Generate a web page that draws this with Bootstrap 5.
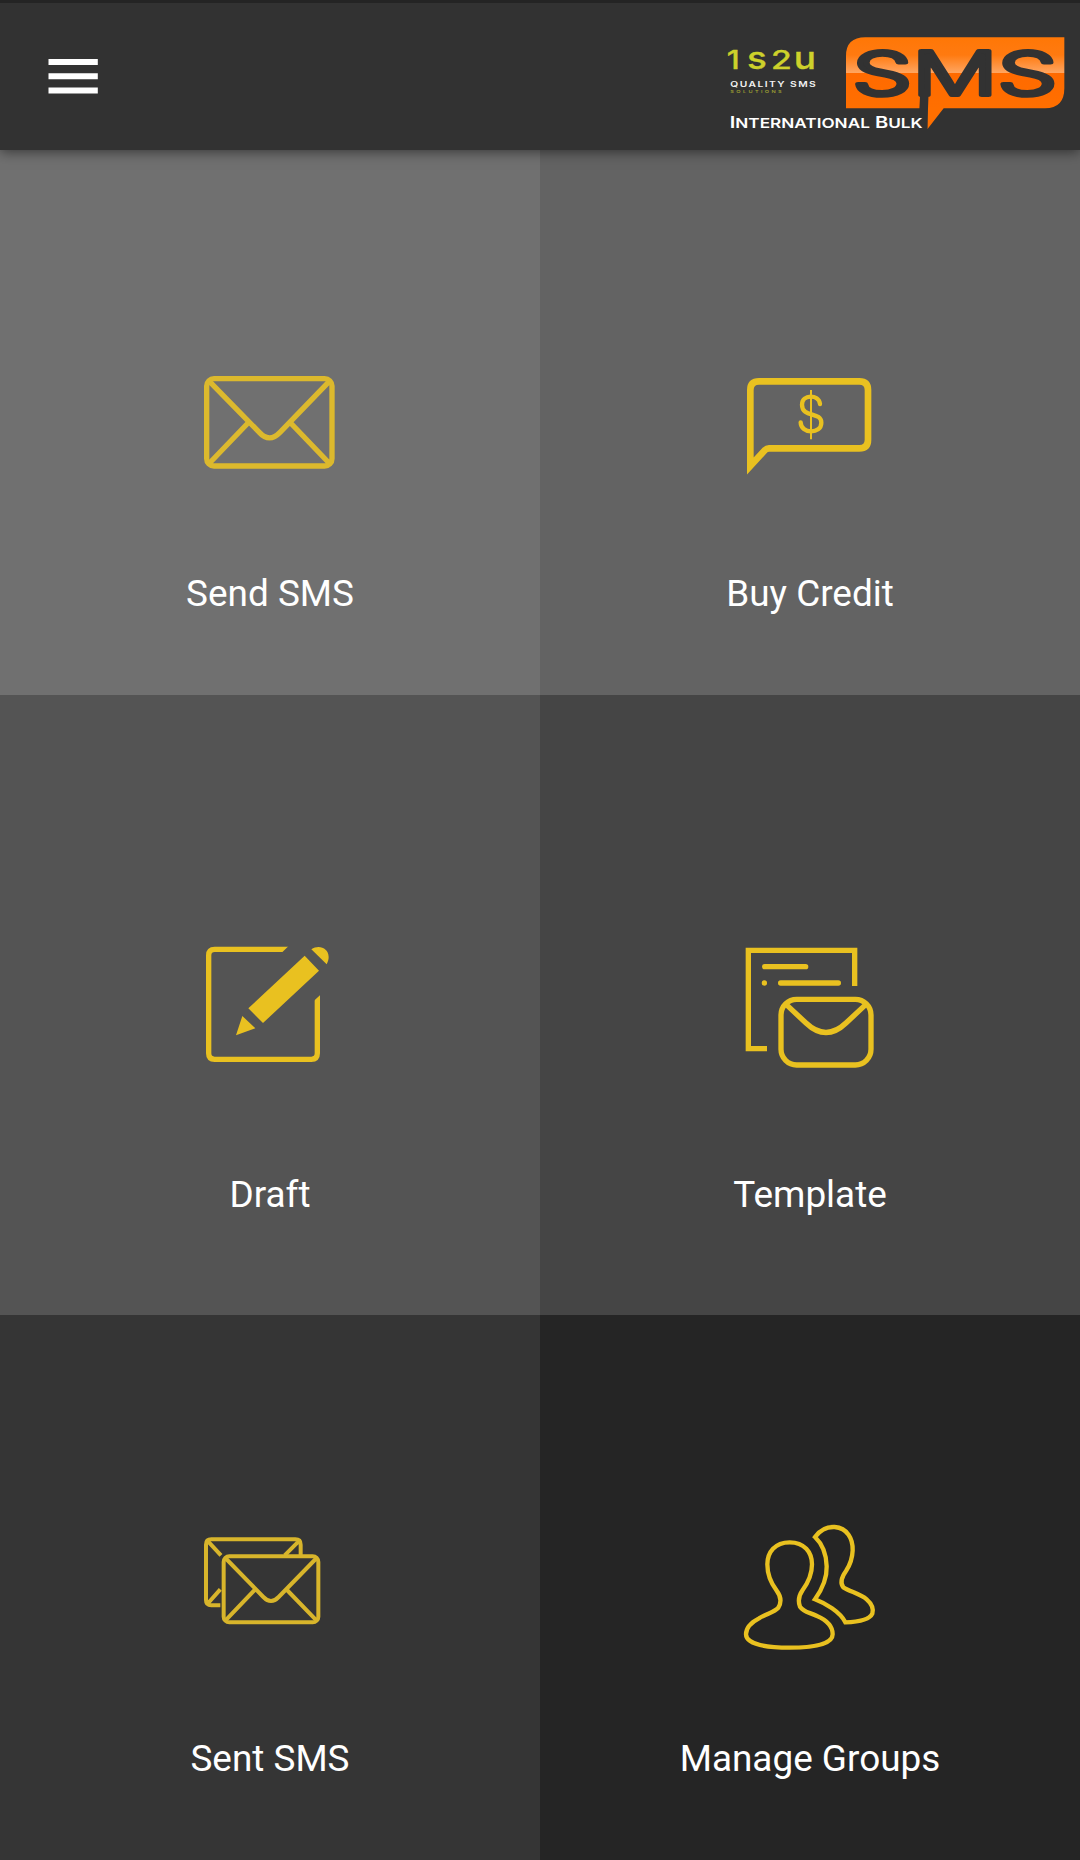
<!DOCTYPE html>
<html lang="en">
<head>
<meta charset="utf-8">
<meta name="viewport" content="width=device-width, initial-scale=1">
<title>1s2u International Bulk SMS</title>
<link href="https://cdn.jsdelivr.net/npm/bootstrap@5.3.0/dist/css/bootstrap.min.css" rel="stylesheet">
<style>
  body { background: #323232; font-family: Roboto, "Liberation Sans", sans-serif; }
  .app { height: 1860px; overflow: hidden; }
  .topbar { height: 150px; background: #323232; border-top: 3px solid #242424; box-shadow: 0 2px 12px rgba(0,0,0,.5); z-index: 2; padding: 0 0 0 48px; }
  .menu-btn { width: 50px; height: 35px; line-height: 0; }
  .brand-logo { width: 380px; height: 130px; align-self: flex-end; }
  .tile { color: #fff; }
  .tile:hover { color: #fff; }
  .tile svg { display: block; width: 180px; fill: none; stroke: #e9c120; flex: none; }
  .tile span { font-size: 36.9px; line-height: 44px; }
  .row-a { height: 545px; } .row-a .tile { padding-top: 200px; } .row-a svg { height: 140px; } .row-a span { margin-top: 82px; }
  .row-b { height: 620px; } .row-b .tile { padding-top: 225px; } .row-b svg { height: 160px; } .row-b span { margin-top: 93px; }
  .row-c { height: 545px; } .row-c .tile { padding-top: 185px; } .row-c svg { height: 160px; } .row-c span { margin-top: 77px; }
  .shade-1 { background: #707070; } .shade-2 { background: #636363; }
  .shade-3 { background: #545454; } .shade-4 { background: #454545; }
  .shade-5 { background: #353535; } .shade-6 { background: #252525; }
  .wide { font-family: Inter, sans-serif; }
  .caps { text-transform: uppercase; }
</style>
<script src="https://cdn.jsdelivr.net/npm/bootstrap@5.3.0/dist/js/bootstrap.bundle.min.js"></script>
</head>
<body>
<div class="app d-flex flex-column">
  <header class="topbar navbar flex-nowrap justify-content-between align-items-center position-relative flex-shrink-0">
    <button class="menu-btn btn p-0 border-0 rounded-0" type="button" aria-label="Menu">
      <svg width="50" height="35" viewBox="0 0 50 35" fill="#fff"><path d="M.5 0h49.300v6H.5zM.5 14.300h49.300v6H.5zM.5 28.600h49.300v6H.5z"/></svg>
    </button>
    <svg class="brand-logo" viewBox="0 0 1140 390" role="img" aria-label="1s2u International Bulk SMS">
      <defs>
        <linearGradient id="gloss" x1="0" y1="52" x2="0" y2="265" gradientUnits="userSpaceOnUse">
          <stop offset="0" stop-color="#ff7706"/><stop offset=".25" stop-color="#ff7a10"/>
          <stop offset=".5" stop-color="#ffa560"/><stop offset=".503" stop-color="#ff6a00"/><stop offset="1" stop-color="#ff6f00"/>
        </linearGradient>
      </defs>
      <path fill="url(#gloss)" d="M438 265V108Q438 52 496 52H1093V205Q1093 265 1035 265H731L682 328V265Z"/>
      <path fill="#323232" d="M666 110H690L684 265L682 330H655Z"/>
      <text class="wide" transform="translate(457 226) scale(1.53 1)" fill="#323232" stroke="#323232" stroke-linejoin="round" font-weight="300" stroke-width="12" font-size="182" textLength="402" lengthAdjust="spacingAndGlyphs">SMS</text>
      <g class="wide">
        <g font-weight="500" fill="#cdd12b" stroke="#cdd12b">
          <text transform="translate(80 147) scale(1.25 1)" font-size="75">1</text>
          <text transform="translate(141 147) scale(1.2 1)" font-size="92">s</text>
          <text transform="translate(213 147) scale(1.35 1)" font-size="75">2</text>
          <text transform="translate(281 147) scale(1.18 1)" font-size="94">u</text>
        </g>
        <text transform="translate(91 200) scale(1.4 1)" font-weight="600" font-size="22" fill="#f2f2f2" textLength="183" lengthAdjust="spacing">QUALITY SMS</text>
        <text transform="translate(91 220) scale(1.4 1)" font-weight="500" font-size="12" fill="#a5a832" textLength="110" lengthAdjust="spacing">SOLUTIONS</text>
        <text x="89" y="325" font-weight="600" font-size="48" fill="#fff" textLength="579" lengthAdjust="spacingAndGlyphs">I<tspan class="caps" font-size="41">nternational</tspan> B<tspan class="caps" font-size="41">ulk</tspan></text>
      </g>
    </svg>
  </header>

  <main class="container-fluid p-0">
    <div class="row g-0 row-a">
      <a class="col-6 tile shade-1 d-flex flex-column align-items-center text-decoration-none" href="#">
        <svg viewBox="0 0 540 420" stroke-width="16" style="stroke:#dcb92d"><rect x="80" y="86" width="376" height="262" rx="22"/><path d="M86 92L238 247Q268 280 300 247L450 92M86 342L204 219M450 342L332 219"/></svg>
        <span>Send SMS</span>
      </a>
      <a class="col-6 tile shade-2 d-flex flex-column align-items-center text-decoration-none" href="#">
        <svg viewBox="0 0 540 420" stroke-width="20"><path d="M91 348V120Q91 94 117 94H418Q444 94 444 120V269Q444 295 418 295H147Q140 295 135 300Z"/><path stroke-width="13" stroke-linecap="round" d="M300 162C296 132 246 132 246 164C246 204 304 184 304 218C304 254 242 252 242 217"/><path stroke-width="6" d="M273 120V268"/></svg>
        <span>Buy Credit</span>
      </a>
    </div>
    <div class="row g-0 row-b">
      <a class="col-6 tile shade-3 d-flex flex-column align-items-center text-decoration-none" href="#">
        <svg viewBox="0 0 540 480" stroke-width="16"><path d="M326 88H104Q86 88 86 106V400Q86 418 104 418H394Q412 418 412 400V222"/><path fill="#545454" stroke="none" d="M326 78L305 98H335V78ZM402 242L423 223V210H402Z"/><path fill="#e9c120" stroke="none" d="M374 107L417 152L249 309L205 265ZM187 288L226 325L168 346ZM394 88C422 69 461 92 440 133Z"/></svg>
        <span>Draft</span>
      </a>
      <a class="col-6 tile shade-4 d-flex flex-column align-items-center text-decoration-none" href="#">
        <svg viewBox="0 0 540 480" stroke-width="16"><path d="M141 386H85V91H404V198"/><path stroke-linecap="round" d="M134 140H257M133 189h.1M182 189H355"/><rect x="183" y="238" width="270" height="197" rx="47"/><path d="M199 254L258 309Q318 366 378 309L437 254"/></svg>
        <span>Template</span>
      </a>
    </div>
    <div class="row g-0 row-c">
      <a class="col-6 tile shade-5 d-flex flex-column align-items-center text-decoration-none" href="#">
        <svg viewBox="0 0 540 480" stroke-width="12" style="stroke:#d8b52b"><path d="M121 316H94Q78 316 78 300V134Q78 118 94 118H346Q362 118 362 134V165M82 122L123 166M358 122L314 166M82 312L121 268"/><rect x="131" y="169" width="284" height="198" rx="17"/><path d="M136 174L250 291Q273 315 296 291L410 174M136 362L224 270M410 362L321 270"/></svg>
        <span>Sent SMS</span>
      </a>
      <a class="col-6 tile shade-6 d-flex flex-column align-items-center text-decoration-none" href="#">
        <svg viewBox="0 0 540 480" stroke-width="13"><path d="M209 127C165 127 142 157 142 193C142 226 153 250 170 272C185 292 183 310 175 323C162 337 142 340 117 355C88 370 78 385 78 403C78 433 142 443 209 443C280 443 338 433 338 403C338 380 319 360 291 348C266 336 252 337 240 320C233 302 236 287 248 270C265 247 276 226 276 193C276 157 253 127 209 127Z"/><path d="M285 111C303 86 324 80 344 81C382 84 399 116 398 151C397 177 390 195 378 213C365 231 359 248 370 262C390 275 420 281 440 298C456 312 461 327 457 341C448 361 413 366 376 367C360 335 316 310 285 298C309 264 321 231 320 199C319 161 306 131 285 111Z"/></svg>
        <span>Manage Groups</span>
      </a>
    </div>
  </main>
</div>
</body>
</html>
